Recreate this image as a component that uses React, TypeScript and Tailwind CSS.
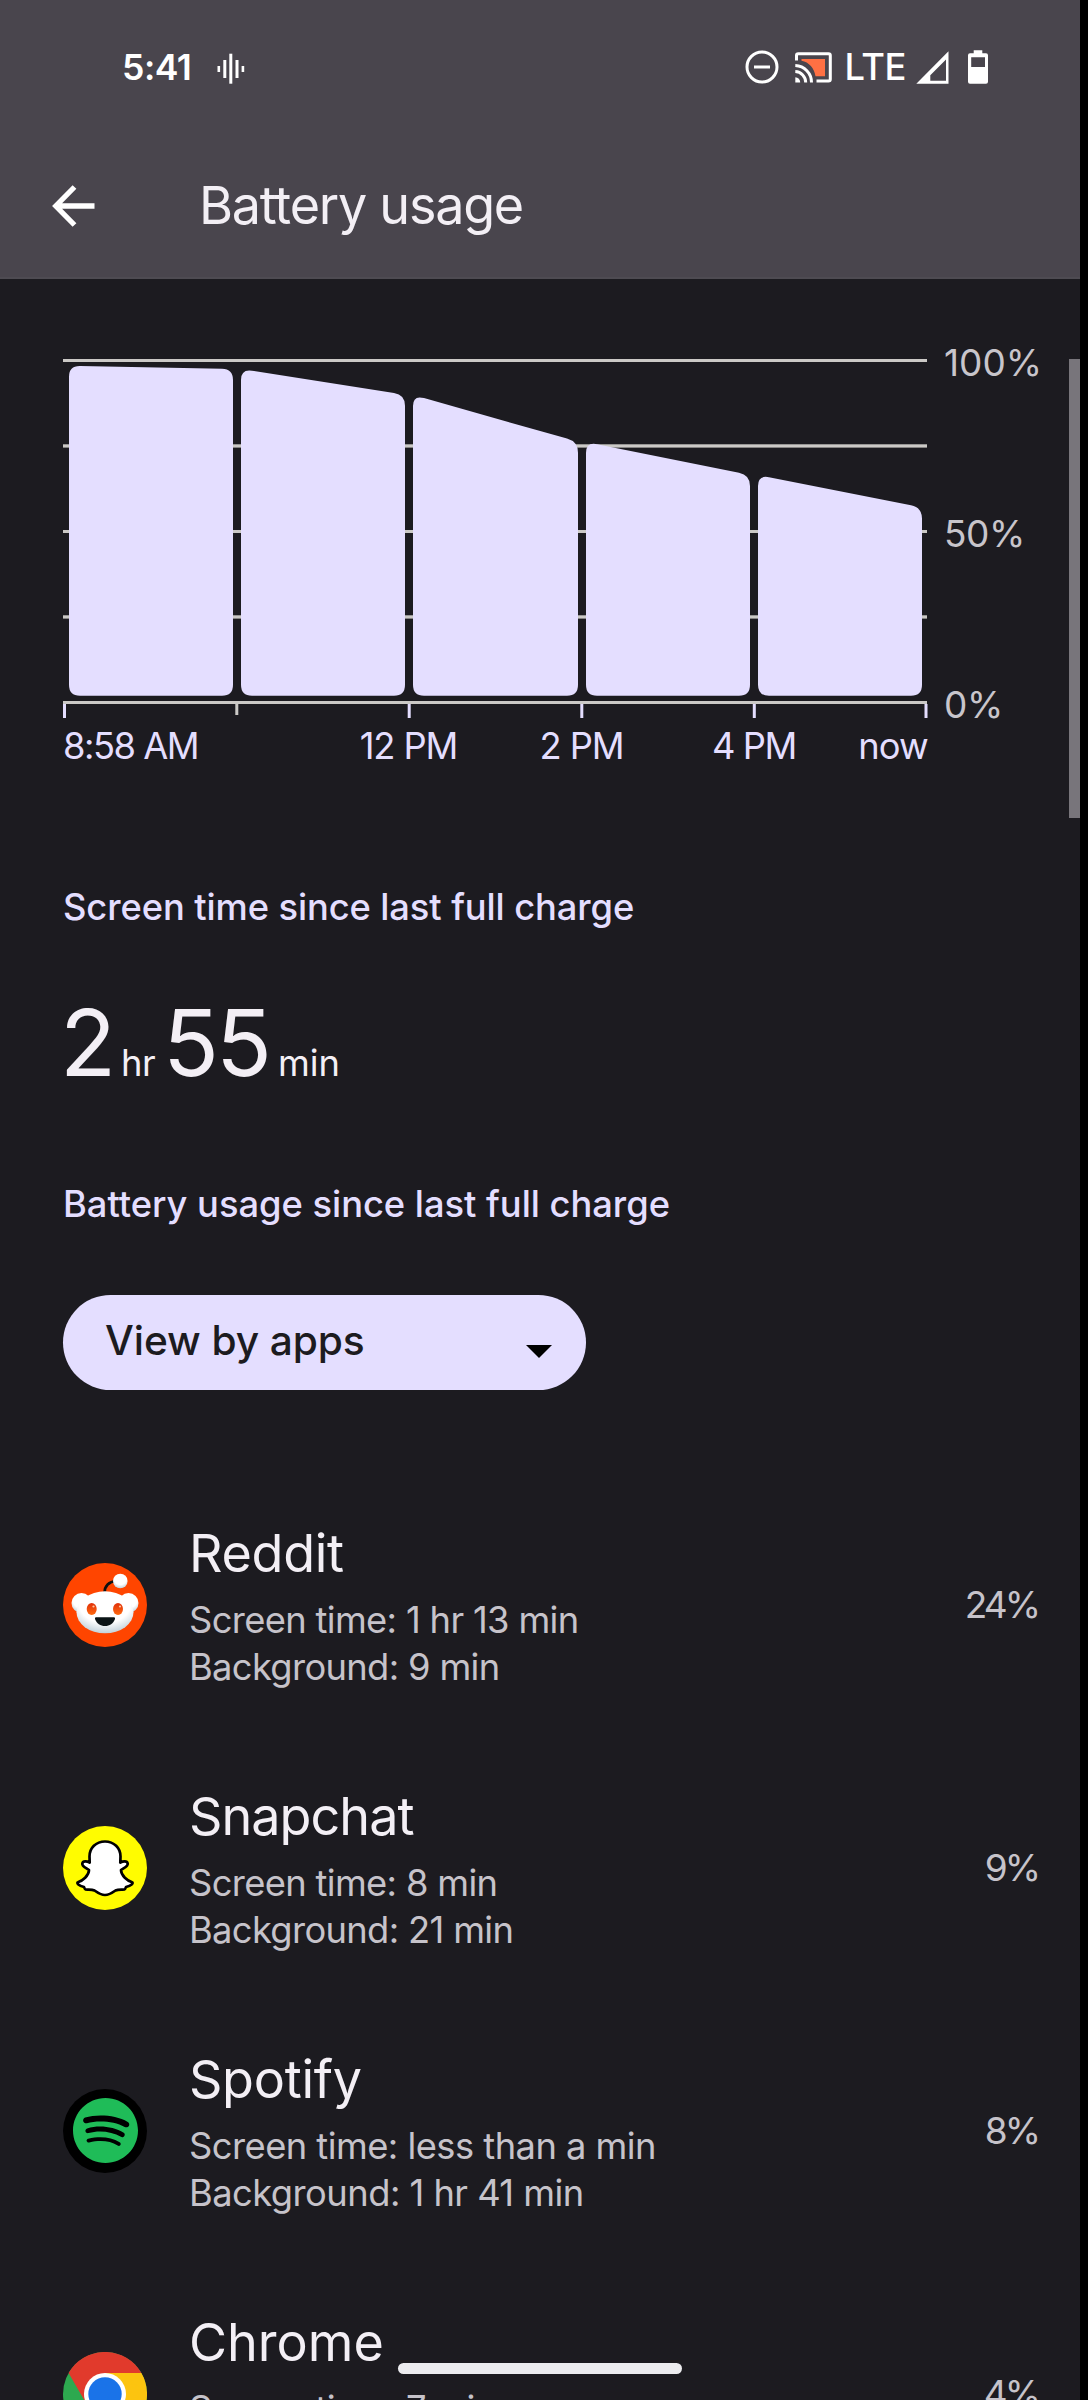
import React from "react";
import { SiSpotify } from "react-icons/si";

const BARS = [
  { x: 69, w: 164, left: 365.7, right: 369 },
  { x: 241, w: 164, left: 369, right: 394.7 },
  { x: 413, w: 165, left: 395, right: 441.7 },
  { x: 586, w: 164, left: 442, right: 475 },
  { x: 758, w: 164, left: 475, right: 507.5 },
];

function barPath({ x, w, left, right }: (typeof BARS)[number]) {
  const r = 11;
  const bottom = 695.7;
  const slope = (right - left) / w;
  const x2 = x + w;
  return [
    `M${x} ${bottom - r}`,
    `V${left + r}`,
    `Q${x} ${left} ${x + r} ${left + slope * r}`,
    `L${x2 - r} ${right - slope * r}`,
    `Q${x2} ${right} ${x2} ${right + r}`,
    `V${bottom - r}`,
    `Q${x2} ${bottom} ${x2 - r} ${bottom}`,
    `H${x + r}`,
    `Q${x} ${bottom} ${x} ${bottom - r}Z`,
  ].join(" ");
}

function VoiceIcon() {
  return (
    <svg className="h-8 w-7" viewBox="0 0 28 32" fill="#fff">
      <rect x="0.5" y="14" width="2.6" height="6" />
      <rect x="6.3" y="8" width="3" height="18" />
      <rect x="12.3" y="1.7" width="3" height="30" />
      <rect x="18.5" y="8" width="3" height="18" />
      <rect x="24.6" y="14" width="2.6" height="6" />
    </svg>
  );
}

function DndIcon() {
  return (
    <svg className="h-[34px] w-[34px]" viewBox="0 0 34 34" fill="none" stroke="#fff" strokeWidth="3">
      <circle cx="17" cy="17" r="15" />
      <path d="M9 17H25" />
    </svg>
  );
}

function CastIcon() {
  return (
    <svg className="h-[31px] w-[37px]" viewBox="0 0 37 31">
      <path d="M6.5 7H30V24.300H20.500C19.500 16.500 14 10 6.500 8.800Z" fill="#ff7043" />
      <g fill="none" stroke="#fff" strokeWidth="3">
        <path d="M1.500 8.500V3.500Q1.500 1.700 3.300 1.700H33.500Q35.300 1.700 35.300 3.500V27.200Q35.300 29 33.500 29H21.500" />
        <path d="M0.300 13.500A16.800 16.800 0 0 1 16.500 30.500" />
        <path d="M0.300 19.600A10.800 10.800 0 0 1 10.700 30.500" />
      </g>
      <path d="M0.300 25.300A5 5 0 0 1 5.200 30.500H0.300Z" fill="#fff" />
    </svg>
  );
}

function SignalIcon() {
  return (
    <svg className="h-[33px] w-[33px]" viewBox="0 0 33 33" fill="#fff">
      <path fillRule="evenodd" d="M0.300 32.700L32.500 0.300V32.700ZM14.300 29.800H30V8.500L14.300 24.200Z" />
    </svg>
  );
}

function BatteryIcon() {
  return (
    <svg className="h-[34px] w-5" viewBox="0 0 20 34" fill="#fff">
      <path
        fillRule="evenodd"
        d="M5.700 0.300H14.300V3.200H18Q20 3.200 20 5.200V31.700Q20 33.700 18 33.700H2Q0 33.700 0 31.700V5.200Q0 3.200 2 3.200H5.700ZM3.200 7.200V17H17V7.200Z"
      />
    </svg>
  );
}

function RedditIcon() {
  return (
    <svg className="h-full w-full" viewBox="0 0 84 84">
      <defs>
        <radialGradient id="face" cx="0.5" cy="0.3" r="0.75">
          <stop offset="0.6" stopColor="#fff" />
          <stop offset="1" stopColor="#b5c8d3" />
        </radialGradient>
        <linearGradient id="eye" x1="0" y1="0" x2="0" y2="1">
          <stop offset="0" stopColor="#e0300a" />
          <stop offset="1" stopColor="#ff6a10" />
        </linearGradient>
      </defs>
      <circle cx="42" cy="42" r="42" fill="#ff4500" />
      <circle cx="18.500" cy="40" r="10" fill="url(#face)" />
      <circle cx="65.500" cy="40" r="10" fill="url(#face)" />
      <path d="M41.700 29.500C41.500 23 46 18.500 53 18" fill="none" stroke="#101010" strokeWidth="2.700" />
      <circle cx="57.300" cy="18" r="7.300" fill="url(#face)" />
      <ellipse cx="42" cy="49.300" rx="28.500" ry="21" fill="url(#face)" />
      <ellipse cx="28.700" cy="46" rx="5" ry="6" fill="url(#eye)" />
      <ellipse cx="55" cy="46" rx="5" ry="6" fill="url(#eye)" />
      <circle cx="30.500" cy="43.500" r="1.100" fill="#ffc49c" />
      <circle cx="57" cy="43.500" r="1.100" fill="#ffc49c" />
      <path d="M33 54.300H51Q52.500 54.300 52 56C50.500 60.500 46.500 63 42 63S33.500 60.500 32 56Q31.500 54.300 33 54.300Z" fill="#0b1416" />
    </svg>
  );
}

function SnapchatIcon() {
  return (
    <svg className="h-full w-full" viewBox="0 0 84 84">
      <circle cx="42" cy="42" r="42" fill="#fffc00" />
      <path
        d="M42 15.500C33 15.500 26.500 22 26.500 30.500L26.700 36.600C24 35 20 34.500 19.300 37.500C18.800 40.500 23 41.800 26 44C26 49.500 19.500 55 14.800 56.200C13.500 57.500 15.500 59.500 21 61C21.500 62 21.500 63.200 22.500 63.500C25 63.800 28.500 63 31.500 64.500C35 67 38 69 42 69S49 67 52.500 64.500C55.500 63 59 63.800 61.500 63.500C62.500 63.200 62.500 62 63 61C68.500 59.500 70.500 57.500 69.200 56.200C64.500 55 58 49.500 58 44C61 41.800 65.200 40.500 64.700 37.500C64 34.500 60 35 57.300 36.600L57.500 30.500C57.500 22 51 15.500 42 15.500Z"
        fill="#fff"
        stroke="#000"
        strokeWidth="2.700"
        strokeLinejoin="round"
      />
    </svg>
  );
}

function SpotifyIcon() {
  return (
    <div className="flex h-full w-full items-center justify-center rounded-full bg-black">
      <SiSpotify className="size-[65px] text-[#1fbc58]" />
    </div>
  );
}

function ChromeIcon() {
  return (
    <svg className="h-full w-full" viewBox="0 0 84 84">
      <circle cx="42" cy="42" r="42" fill="#2da94f" />
      <path d="M42 21H78.400A42 42 0 0 1 42 84L60.200 52.500Z" fill="#fcc40f" />
      <path d="M5.600 21A42 42 0 0 1 78.400 21H42L23.800 52.500Z" fill="#e13a2c" />
      <circle cx="42" cy="42" r="21" fill="#fff" />
      <circle cx="42" cy="42" r="16.700" fill="#1a73e8" />
    </svg>
  );
}

const APPS = [
  {
    name: "Reddit", title: "tracking-[-0.3px]", Icon: RedditIcon, pct: "24%",
    screen: "Screen time: 1 hr 13 min", background: "Background: 9 min", detail: "tracking-[-0.65px]",
  },
  {
    name: "Snapchat", title: "tracking-[-0.95px]", Icon: SnapchatIcon, pct: "9%",
    screen: "Screen time: 8 min", background: "Background: 21 min", detail: "tracking-[-0.65px]",
  },
  {
    name: "Spotify", title: "tracking-[-0.3px]", Icon: SpotifyIcon, pct: "8%",
    screen: "Screen time: less than a min", background: "Background: 1 hr 41 min", detail: "tracking-[-0.53px]",
  },
  {
    name: "Chrome", title: "tracking-normal", Icon: ChromeIcon, pct: "4%",
    screen: "Screen time: 7 min", background: "Background: 5 min", detail: "tracking-[-0.65px]",
  },
];

function BatteryChart() {
  return (
    <section className="flex pl-[63px] pt-[65px]">
      <div className="w-[865px] shrink-0">
        <svg className="block h-[384px] w-[865px]" viewBox="63 344 865 384">
          <g fill="#cbc9c6">
            <rect x="63" y="359" width="864" height="3" />
            <rect x="63" y="444.300" width="864" height="3.300" />
            <rect x="63" y="530" width="864" height="3" />
            <rect x="63" y="615.300" width="864" height="3.300" />
            <rect x="63" y="701" width="864" height="3" />
            <rect x="235.300" y="704" width="3" height="11" />
          </g>
          <g fill="#e4deff">
            <rect x="63" y="704" width="3" height="14" />
            <rect x="407.700" y="704" width="3" height="14" />
            <rect x="580.300" y="704" width="3" height="14" />
            <rect x="752.800" y="704" width="3" height="14" />
            <rect x="924.500" y="704" width="3" height="14" />
            {BARS.map((bar) => (
              <path key={bar.x} d={barPath(bar)} />
            ))}
          </g>
        </svg>
        <div className="flex text-[36.3px] leading-[36px] text-[#e4deff]">
          <span className="w-[259px] tracking-[-1.5px]">8:58 AM</span>
          <span className="w-[173px] text-center tracking-[-1.1px]">12 PM</span>
          <span className="w-[173px] text-center tracking-[-1.1px]">2 PM</span>
          <span className="w-[172px] text-center tracking-[-1.4px]">4 PM</span>
          <span className="flex-1 text-right tracking-[-0.8px]">now</span>
        </div>
      </div>
      <div className="flex h-[379px] flex-col justify-between pl-[16px] text-[37px] leading-[37px] text-[#c8c5cb]">
        <span>100%</span>
        <span className="tracking-[-0.4px]">50%</span>
        <span className="tracking-[-0.3px]">0%</span>
      </div>
    </section>
  );
}

export default function App() {
  return (
    <div className="h-[2400px] w-full overflow-hidden bg-black font-['Inter',sans-serif]">
      <main className="relative h-full w-[1080px] overflow-hidden bg-[#1c1b20]">
        <header className="h-[279px] border-b-2 border-[#4e4b52] bg-[#49454d]">
          <div className="flex h-[135px] items-center pl-[122px] pr-[92px]">
            <span className="w-[95px] text-[35.6px] font-semibold leading-none tracking-[-0.5px] text-white">5:41</span>
            <VoiceIcon />
            <div className="ml-auto flex items-center">
              <DndIcon />
              <div className="ml-4">
                <CastIcon />
              </div>
              <span className="ml-[13px] text-[36.3px] font-medium leading-none tracking-[-0.4px] text-white">LTE</span>
              <div className="ml-[10px]">
                <SignalIcon />
              </div>
              <div className="ml-[19px]">
                <BatteryIcon />
              </div>
            </div>
          </div>
          <div className="flex h-[141px] items-center pl-[52px]">
            <svg className="h-[42px] w-[43px]" viewBox="0 0 43 42" fill="none" stroke="#fff" strokeWidth="5.300">
              <path d="M42.500 21H4.500M22.500 2L3.800 21L22.500 40" />
            </svg>
            <h1 className="ml-[104px] text-[52.1px] leading-[60px] tracking-[-1.25px] text-[#f3eff5]">Battery usage</h1>
          </div>
        </header>

        <BatteryChart />

        <div className="pl-[63px]">
          <h2 className="mt-[123px] text-[36.3px] font-medium leading-10 tracking-[-0.1px] text-[#e4deff]">
            Screen time since last full charge
          </h2>
          <div className="mt-[66px] -ml-[3px] flex h-[100px] items-baseline text-[#f3eff5]">
            <span className="text-[92px] leading-[100px]">2</span>
            <span className="ml-[5px] text-[36.3px] leading-none tracking-[-0.6px]">hr</span>
            <span className="ml-2 text-[92px] leading-[100px] tracking-[-3px]">55</span>
            <span className="ml-[9px] text-[36.3px] leading-none">min</span>
          </div>
          <h2 className="mt-[91px] text-[36.3px] font-medium leading-10 tracking-[-0.02px] text-[#e4deff]">
            Battery usage since last full charge
          </h2>
          <button className="mt-[71px] flex h-[95px] w-[523px] items-center justify-between rounded-full bg-[#e4deff] pl-[42px] pr-[34px] text-[#1c1b20]">
            <span className="-mt-[3px] text-[40.7px] font-medium leading-[46px] tracking-[-0.1px]">View by apps</span>
            <svg className="mt-[18px] h-[13px] w-[26px]" viewBox="0 0 26 13">
              <path d="M0 0H26L13 13Z" fill="#000" />
            </svg>
          </button>
        </div>

        <ul className="mt-[83px] pl-[63px] pr-[42px]">
          {APPS.map(({ name, title, Icon, screen, background, detail, pct }) => (
            <li key={name} className="flex h-[263px] items-center">
              <div className="size-[84px] shrink-0">
                <Icon />
              </div>
              <div className={`ml-[42px] flex-1 pt-[5px] text-[36.3px] leading-[47px] text-[#c6c3ca] ${detail}`}>
                <h3 className={`mb-[13px] text-[52.1px] leading-[60px] text-[#f3eff5] ${title}`}>{name}</h3>
                <p>{screen}</p>
                <p>{background}</p>
              </div>
              <span className="text-[37px] leading-none tracking-[-3px] text-[#c6c3ca]">{pct}</span>
            </li>
          ))}
        </ul>

        <div className="absolute right-0 top-[359px] h-[459px] w-[11px] bg-[#78757b]" />
        <div className="absolute left-[398px] top-[2363px] h-[11px] w-[284px] rounded-full bg-[#ececef]" />
      </main>
    </div>
  );
}
